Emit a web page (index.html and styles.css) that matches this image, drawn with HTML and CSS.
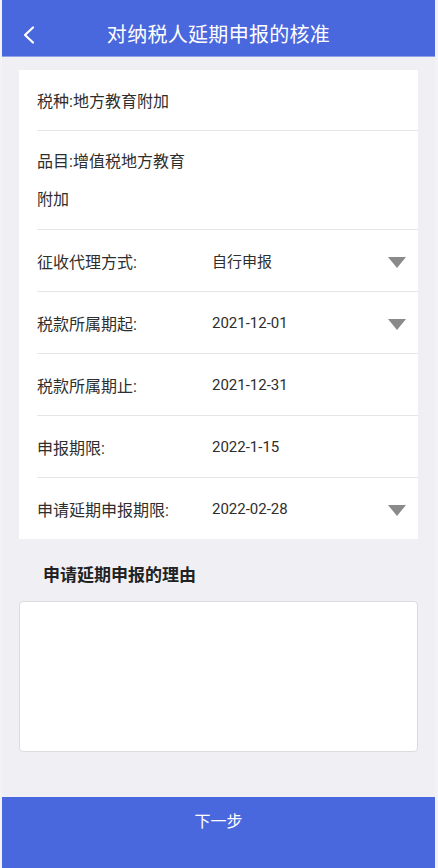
FILE: index.html
```html
<!DOCTYPE html>
<html lang="zh-CN">
<head>
    <meta charset="UTF-8">
    <meta name="viewport" content="width=device-width, initial-scale=1.0">
    <title>对纳税人延期申报的核准</title>
    <link rel="stylesheet" href="styles.css">
</head>
<body>
    <div class="page">
        <header class="topbar">
            <span class="back">
                <svg width="14" height="20" viewBox="0 0 14 20">
                    <polyline points="11,2.5 3,10 11,17.5" fill="none" stroke="#fff" stroke-width="2.2" stroke-linecap="round" stroke-linejoin="round"/>
                </svg>
            </span>
            <h1>对纳税人延期申报的核准</h1>
        </header>

        <main class="content">
            <div class="card">
                <div class="row row-first">
                    <span class="label wide">税种:地方教育附加</span>
                </div>
                <div class="row row-multi">
                    <span class="label wide">品目:增值税地方教育<br>附加</span>
                </div>
                <div class="row">
                    <span class="label">征收代理方式:</span>
                    <span class="value">自行申报</span>
                    <span class="arrow"></span>
                </div>
                <div class="row">
                    <span class="label">税款所属期起:</span>
                    <span class="value">2021-12-01</span>
                    <span class="arrow"></span>
                </div>
                <div class="row">
                    <span class="label">税款所属期止:</span>
                    <span class="value">2021-12-31</span>
                </div>
                <div class="row">
                    <span class="label">申报期限:</span>
                    <span class="value">2022-1-15</span>
                </div>
                <div class="row">
                    <span class="label">申请延期申报期限:</span>
                    <span class="value">2022-02-28</span>
                    <span class="arrow"></span>
                </div>
            </div>

            <h2 class="section-title">申请延期申报的理由</h2>
            <textarea class="reason"></textarea>
        </main>

        <button class="next" type="button">下一步</button>
    </div>
</body>
</html>
```

FILE: styles.css
```css
/* Global */
body {
    margin: 0;
    padding: 0;
    background: #f3f3f6;
    font-family: Roboto, "Noto Sans CJK SC", sans-serif;
    color: #333;
}

.page {
    margin: 0 3px 0 2px;
    height: 868px;
    display: flex;
    flex-direction: column;
    background: #efeff4;
}

/* Header */
.topbar {
    height: 57px;
    background: #4a68dd;
    border-bottom: 1px solid #8ea1e6;
    display: flex;
    align-items: center;
    justify-content: center;
    position: relative;
    padding-top: 10px;
    box-sizing: border-box;
}

.topbar h1 {
    margin: 0;
    font-size: 20px;
    font-weight: normal;
    color: #fff;
    letter-spacing: 0.3px;
}

.back {
    position: absolute;
    left: 20px;
    top: 25px;
    display: flex;
}

/* Info card */
.content {
    padding: 13px 17px 0 17px;
}

.card {
    background: #fff;
}

.row {
    display: flex;
    align-items: center;
    min-height: 61px;
    margin-left: 18px;
    padding-right: 12px;
    border-bottom: 1px solid #e6e6e9;
    font-size: 16px;
}

.row:last-child {
    border-bottom: none;
}

.row-first {
    min-height: 60px;
}

.row-multi {
    padding: 12px 12px 10px 0;
    line-height: 38px;
}

.label {
    width: 175px;
    flex-shrink: 0;
    white-space: nowrap;
    font-family: Roboto, "Noto Sans CJK SC", sans-serif;
    color: #2e2e2e;
}

.label.wide {
    letter-spacing: 0;
}

.value {
    flex: 1;
    font-size: 15px;
    font-family: Roboto, "Noto Sans CJK SC", sans-serif;
    color: #2e2e2e;
}

.arrow {
    width: 0;
    height: 0;
    border-left: 9px solid transparent;
    border-right: 9px solid transparent;
    border-top: 11px solid #8a8a8a;
    margin-top: 3px;
}

/* Reason */
.section-title {
    margin: 23px 0 15px 24px;
    font-size: 17px;
    line-height: 24px;
    font-weight: bold;
    color: #222;
    font-family: "Noto Sans CJK SC", sans-serif;
}

.reason {
    display: block;
    width: 100%;
    height: 151px;
    box-sizing: border-box;
    border: 1px solid #dcdcdf;
    border-radius: 4px;
    background: #fff;
    resize: none;
    outline: none;
}

/* Footer button */
.next {
    margin-top: auto;
    height: 71px;
    border: none;
    background: #4a68dd;
    color: #fff;
    font-size: 16px;
    font-family: "Noto Sans CJK SC", sans-serif;
    padding: 0 0 25px 0;
    line-height: 46px;
    cursor: pointer;
}
```
